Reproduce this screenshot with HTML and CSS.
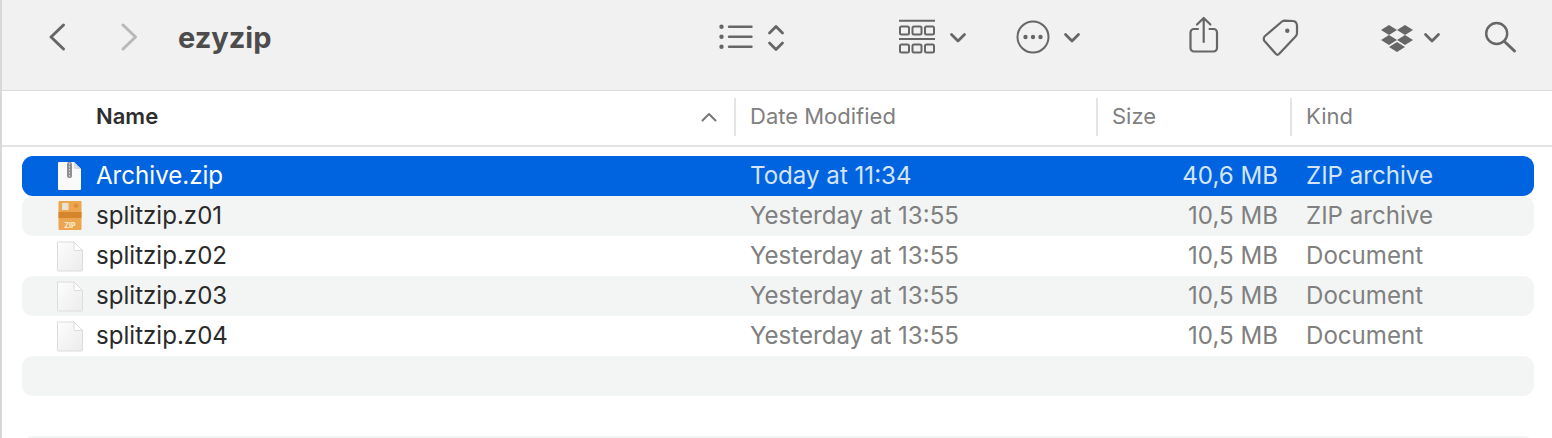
FILE: index.html
```html
<!DOCTYPE html>
<html lang="en">
<head>
<meta charset="utf-8">
<title>ezyzip</title>
<link rel="stylesheet" href="styles.css">
</head>
<body>
<svg class="defs" width="0" height="0" aria-hidden="true"><defs><linearGradient id="docfill" x1="0" y1="0" x2="1" y2="1"><stop offset="0" stop-color="#fdfdfd"/><stop offset="1" stop-color="#ececec"/></linearGradient></defs></svg>
<div class="window">
  <header class="toolbar">
    <svg class="icon back" width="18" height="40" viewBox="0 0 18 40"><path d="M14.500 7 2 19l12.500 12" class="s" stroke-width="3"/></svg>
    <svg class="icon forward" width="18" height="40" viewBox="0 0 18 40"><path d="M2 7l12.500 12L2 31" class="s dim" stroke-width="3"/></svg>
    <h1 class="title">ezyzip</h1>
    <svg class="icon list" width="34" height="40" viewBox="0 0 34 40"><g class="f"><circle cx="2.500" cy="8.700" r="2.200"/><circle cx="2.500" cy="18.700" r="2.200"/><circle cx="2.500" cy="28.700" r="2.200"/></g><path d="M10 8.700h22.500M10 18.700h22.500M10 28.700h22.500" class="s" stroke-width="2.400"/></svg>
    <svg class="icon updown" width="18" height="40" viewBox="0 0 18 40"><path d="M2.500 15l6.500-6.500 6.500 6.500M2.500 25l6.500 6.500 6.500-6.500" class="s" stroke-width="2.800"/></svg>
    <svg class="icon grid" width="36" height="40" viewBox="0 0 36 40"><path d="M0 2.700h36M0 21h36" class="bar"/><g class="box"><rect x="1" y="8.500" width="9" height="8" rx="1.500"/><rect x="13.500" y="8.500" width="9" height="8" rx="1.500"/><rect x="26" y="8.500" width="9" height="8" rx="1.500"/><rect x="1" y="26.500" width="9" height="8" rx="1.500"/><rect x="13.500" y="26.500" width="9" height="8" rx="1.500"/><rect x="26" y="26.500" width="9" height="8" rx="1.500"/></g></svg>
    <svg class="icon chev c-grid" width="16" height="40" viewBox="0 0 16 40"><path d="M1.500 16.500l6.500 6.500 6.500-6.500" class="s" stroke-width="2.800"/></svg>
    <svg class="icon more" width="34" height="40" viewBox="0 0 34 40"><circle cx="17" cy="19" r="15.500" class="s" stroke-width="2"/><g class="f"><circle cx="9.500" cy="19" r="2.200"/><circle cx="17" cy="19" r="2.200"/><circle cx="24.500" cy="19" r="2.200"/></g></svg>
    <svg class="icon chev c-more" width="16" height="40" viewBox="0 0 16 40"><path d="M1.500 16.500l6.500 6.500 6.500-6.500" class="s" stroke-width="2.800"/></svg>
    <svg class="icon share" width="30" height="40" viewBox="0 0 30 40"><path d="M9 11H5a3.500 3.500 0 0 0-3.500 3.500v15.500a3.500 3.500 0 0 0 3.500 3.500h19.500a3.500 3.500 0 0 0 3.500-3.500V14.500a3.500 3.500 0 0 0-3.500-3.500h-4" class="s" stroke-width="2.200"/><path d="M14.700 24V0.500M8 6.500l6.700-6.500 6.700 6.500" class="s" stroke-width="2.200"/></svg>
    <svg class="icon tag" width="38" height="40" viewBox="0 0 38 40"><path d="M2.500 18.500 20 3.500Q21 2.700 23 2.700L31 3Q35 3.500 35 8L35 15Q35 17 34 18L17 36Q15.500 37.500 14 36L2.500 23Q1 21 2.500 18.500z" class="s" stroke-width="2.200"/><circle cx="25.300" cy="12.700" r="2.200" class="f"/></svg>
    <svg class="icon dropbox" width="32" height="40" viewBox="0 0 32 40"><path class="f" d="M8 7l8 5-8 5-8-5zM24 7l8 5-8 5-8-5zM8 17l8 5-8 5-8-5zM24 17l8 5-8 5-8-5zM16 24l8 5-8 5-8-5z"/></svg>
    <svg class="icon chev c-drop" width="16" height="40" viewBox="0 0 16 40"><path d="M1.500 16.500l6.500 6.500 6.500-6.500" class="s" stroke-width="2.800"/></svg>
    <svg class="icon search" width="32" height="40" viewBox="0 0 32 40"><circle cx="11.700" cy="15.500" r="10.500" class="s" stroke-width="2.400"/><path d="M20.500 24.500 29.500 33" class="s" stroke-width="3"/></svg>
  </header>

  <div class="colhead">
    <div class="hcell hname"><span>Name</span><svg class="sort" width="16" height="10" viewBox="0 0 16 10"><path d="M1.500 8.500 8 2l6.500 6.500" class="sortline"/></svg></div>
    <div class="hcell">Date Modified</div>
    <div class="hcell">Size</div>
    <div class="hcell">Kind</div>
  </div>

  <div class="rows">
    <div class="row selected">
      <div class="cname">
        <svg class="ficon" width="26" height="32" viewBox="0 0 26 32"><path d="M2 2h15l7 7v20a1 1 0 0 1-1 1H2a1 1 0 0 1-1-1V3a1 1 0 0 1 1-1z" fill="#fafafa"/><path d="M17 2l7 7h-6a1 1 0 0 1-1-1z" fill="#d9dce2"/><rect x="10" y="2" width="5" height="16" rx="2" fill="#8f8f93"/><path d="M12.500 3v14" stroke="#d8d8d8" stroke-width="1" stroke-dasharray="1.500 1.500"/></svg>
        <span>Archive.zip</span>
      </div>
      <div class="cdate">Today at 11:34</div><div class="csize">40,6 MB</div><div class="ckind">ZIP archive</div>
    </div>
    <div class="row stripe">
      <div class="cname">
        <svg class="ficon" width="26" height="32" viewBox="0 0 26 32"><rect x="1.500" y="1" width="23" height="29" rx="1" fill="#eba64f"/><rect x="1.500" y="12" width="23" height="6" fill="#d5862c"/><rect x="5" y="3" width="6.500" height="7" fill="#e9e1d4"/><circle cx="19" cy="5.700" r="2.200" fill="#dc8f38"/><text x="13" y="28" class="ziplabel">ZIP</text></svg>
        <span>splitzip.z01</span>
      </div>
      <div class="cdate">Yesterday at 13:55</div><div class="csize">10,5 MB</div><div class="ckind">ZIP archive</div>
    </div>
    <div class="row">
      <div class="cname">
        <svg class="ficon" width="26" height="32" viewBox="0 0 26 32"><path d="M.5 2h16.500l8.500 8.500V30a1 1 0 0 1-1 1H1.500a1 1 0 0 1-1-1z" class="doc"/><path d="M17 2l8.500 8.500h-7.500a1 1 0 0 1-1-1z" class="fold"/></svg>
        <span>splitzip.z02</span>
      </div>
      <div class="cdate">Yesterday at 13:55</div><div class="csize">10,5 MB</div><div class="ckind">Document</div>
    </div>
    <div class="row stripe">
      <div class="cname">
        <svg class="ficon" width="26" height="32" viewBox="0 0 26 32"><path d="M.5 2h16.500l8.500 8.500V30a1 1 0 0 1-1 1H1.500a1 1 0 0 1-1-1z" class="doc"/><path d="M17 2l8.500 8.500h-7.500a1 1 0 0 1-1-1z" class="fold"/></svg>
        <span>splitzip.z03</span>
      </div>
      <div class="cdate">Yesterday at 13:55</div><div class="csize">10,5 MB</div><div class="ckind">Document</div>
    </div>
    <div class="row">
      <div class="cname">
        <svg class="ficon" width="26" height="32" viewBox="0 0 26 32"><path d="M.5 2h16.500l8.500 8.500V30a1 1 0 0 1-1 1H1.500a1 1 0 0 1-1-1z" class="doc"/><path d="M17 2l8.500 8.500h-7.500a1 1 0 0 1-1-1z" class="fold"/></svg>
        <span>splitzip.z04</span>
      </div>
      <div class="cdate">Yesterday at 13:55</div><div class="csize">10,5 MB</div><div class="ckind">Document</div>
    </div>
    <div class="row stripe"></div>
    <div class="row"></div>
    <div class="row stripe"></div>
  </div>
</div>
</body>
</html>
```

FILE: styles.css
```css
html, body {
  margin: 0;
  height: 100%;
  overflow: hidden;
  background: #fff;
}

.defs { display: block; height: 0; }

.window {
  height: 438px;
  border-left: 2px solid #d8d8d8;
  overflow: hidden;
  font-family: Inter, "Liberation Sans", sans-serif;
  box-sizing: border-box;
}

.toolbar {
  display: flex;
  align-items: flex-start;
  padding: 18px 0 0 47px;
  height: 72px;
  background: #f1f1f1;
  border-bottom: 1px solid #dcdcdc;
}

.icon { flex: none; display: block; overflow: visible; }
.s { fill: none; stroke: #666; stroke-linecap: round; stroke-linejoin: round; }
.dim { stroke: #b8b8b8; }
.f { fill: #666; }
.bar { fill: none; stroke: #666; stroke-width: 2; }
.box { fill: none; stroke: #666; stroke-width: 2; }

.forward { margin-left: 54px; }
.title {
  margin: 0 0 0 39px;
  width: 202px;
  line-height: 40px;
  font-size: 29px;
  font-weight: 700;
  color: #4c4c4c;
}
.list { margin-left: 339px; }
.updown { margin-left: 14px; }
.grid { margin-left: 114px; }
.c-grid { margin-left: 15px; }
.more { margin-left: 50px; }
.c-more { margin-left: 14px; }
.share { margin-left: 109px; }
.tag { margin-left: 43px; }
.dropbox { margin-left: 81px; }
.c-drop { margin-left: 11px; }
.search { margin-left: 45px; }

.colhead {
  display: grid;
  grid-template-columns: 732px 362px 194px 1fr;
  align-items: start;
  padding-top: 7px;
  height: 47px;
  border-bottom: 2px solid #e4e4e4;
  font-size: 22px;
  color: #7f7f7f;
}
.hcell {
  height: 38px;
  line-height: 36px;
  padding-left: 14px;
  border-left: 2px solid #e4e4e4;
  box-sizing: border-box;
}
.hname {
  display: flex;
  justify-content: space-between;
  align-items: center;
  padding: 0 17px 2px 94px;
  border-left: 0;
  font-weight: 600;
  color: #2e2e2e;
}
.sort { display: block; margin-top: 2px; }
.sortline { fill: none; stroke: #777; stroke-width: 2; stroke-linecap: round; stroke-linejoin: round; }

.rows {
  padding: 9px 18px 0 20px;
}
.row {
  display: grid;
  grid-template-columns: 712px 362px 194px 1fr;
  height: 40px;
  align-items: center;
  border-radius: 11px;
  font-size: 24.100px;
  color: #808080;
}
.stripe { background: #f3f5f5; }
.selected { background: #0064e1; color: #d5e4f8; }
.cname {
  display: flex;
  align-items: center;
  gap: 13px;
  padding-left: 35px;
  color: #2a2a2a;
}
.selected .cname { color: #fff; }
.cname span, .cdate, .csize, .ckind { padding-bottom: 2px; }
.ficon { display: block; flex: none; }
.cdate { padding-left: 16px; }
.csize { text-align: right; padding-right: 12px; }
.ckind { padding-left: 16px; }
.doc { fill: url(#docfill); stroke: #dcdcdc; stroke-width: 1; }
.fold { fill: #fff; stroke: #dcdcdc; stroke-width: 1; }
.ziplabel { font-family: Inter, sans-serif; font-size: 7px; font-weight: 800; fill: #fbe9cf; text-anchor: middle; }
```
